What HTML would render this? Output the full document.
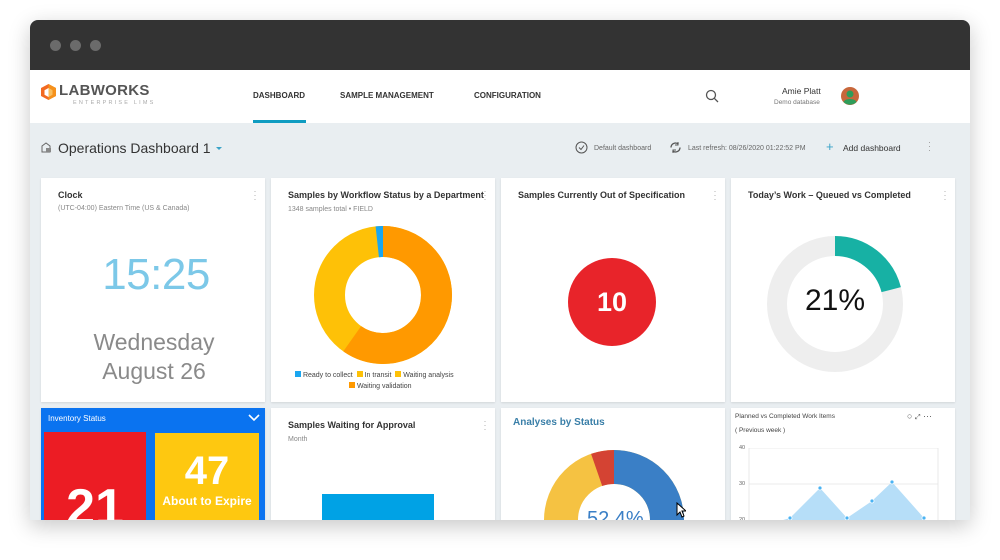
<!DOCTYPE html>
<html><head><meta charset="utf-8"><style>
*{margin:0;padding:0;box-sizing:border-box}
body{width:1000px;height:560px;background:#fff;font-family:"Liberation Sans",sans-serif;position:relative;overflow:hidden}
.win{position:absolute;left:30px;top:20px;width:940px;height:500px;border-radius:8px 8px 0 0;overflow:hidden;box-shadow:0 6px 22px rgba(0,0,0,.22);background:#e9eef1}
.tb{height:50px;background:#333}
.dot{position:absolute;top:20px;width:11px;height:11px;border-radius:50%;background:#6b6b6b}
.nav{position:absolute;top:50px;left:0;width:940px;height:53px;background:#fff}
.abs{position:absolute}
.card{position:absolute;background:#fff;box-shadow:0 1px 2px rgba(0,0,0,.1);overflow:hidden}
.ct{position:absolute;left:17px;top:12px;font-size:9px;font-weight:bold;color:#333}
.cs{position:absolute;left:17px;top:28px;font-size:7px;color:#888}
.kb{position:absolute;right:8px;top:11px;font-size:9px;color:#aaa;line-height:4px;width:4px;text-align:center}
</style></head><body>
<div class="win">
<div class="tb"></div>
<div class="dot" style="left:20px"></div><div class="dot" style="left:40px"></div><div class="dot" style="left:60px"></div>
<div class="nav">
 <svg class="abs" style="left:10px;top:13px" width="17" height="18" viewBox="0 0 17 18"><path d="M8.5 1L16 5v8l-7.5 4L1 13V5z" fill="#f26a21"/><path d="M8.5 5L12.5 7.2v4.6L8.5 14 4.5 11.8V7.2z" fill="#fff"/><path d="M8.5 1L16 5v8l-7.5 4z" fill="#f7a21b" opacity=".7"/></svg>
 <div class="abs" style="left:29px;top:12px;font-size:15px;font-weight:bold;color:#555;letter-spacing:.3px">LABWORKS</div>
 <div class="abs" style="left:43px;top:30px;font-size:5.5px;color:#aaa;letter-spacing:2.2px">ENTERPRISE LIMS</div>
 <div class="abs" style="left:223px;top:21px;font-size:8px;font-weight:bold;color:#333">DASHBOARD</div>
 <div class="abs" style="left:223px;top:50px;width:53px;height:3px;background:#0f9cc1"></div>
 <div class="abs" style="left:310px;top:21px;font-size:8px;font-weight:bold;color:#333">SAMPLE MANAGEMENT</div>
 <div class="abs" style="left:444px;top:21px;font-size:8px;font-weight:bold;color:#333">CONFIGURATION</div>
 <svg class="abs" style="left:675px;top:19px" width="14" height="14" viewBox="0 0 14 14"><circle cx="6" cy="6" r="4.5" fill="none" stroke="#555" stroke-width="1.3"/><path d="M9.3 9.3L13 13" stroke="#555" stroke-width="1.3"/></svg>
 <div class="abs" style="left:752px;top:16px;font-size:8.5px;color:#333">Amie Platt</div>
 <div class="abs" style="left:744px;top:29px;font-size:6.5px;color:#777">Demo database</div>
 <svg class="abs" style="left:811px;top:17px" width="18" height="18" viewBox="0 0 18 18"><circle cx="9" cy="9" r="9" fill="#c8673b"/><circle cx="9" cy="7" r="3.5" fill="#2e9d5a"/><path d="M2.5 15c1.5-4 11.5-4 13 0a9 9 0 0 1-13 0z" fill="#2e9d5a"/></svg>
</div>
<svg class="abs" style="left:11px;top:122px" width="12" height="12" viewBox="0 0 12 12"><path d="M1 4L5 1l4 3v6H1z" fill="none" stroke="#666" stroke-width="1"/><rect x="5" y="6" width="5" height="4" fill="#888"/></svg>
<div class="abs" style="left:28px;top:120px;font-size:14px;color:#333">Operations Dashboard 1</div>
<div class="abs" style="left:186px;top:127px;width:0;height:0;border-left:3px solid transparent;border-right:3px solid transparent;border-top:3px solid #3aa3c8"></div>
<svg class="abs" style="left:545px;top:121px" width="13" height="13" viewBox="0 0 13 13"><circle cx="6.5" cy="6.5" r="5.5" fill="none" stroke="#555" stroke-width="1"/><path d="M4 6.5l2 2 3-4" fill="none" stroke="#555" stroke-width="1"/></svg>
<div class="abs" style="left:564px;top:125px;font-size:7px;color:#666">Default dashboard</div>
<svg class="abs" style="left:639px;top:121px" width="13" height="13" viewBox="0 0 13 13"><path d="M2 6.5a4.5 4.5 0 0 1 7.5-3.3M11 6.5a4.5 4.5 0 0 1-7.5 3.3" fill="none" stroke="#555" stroke-width="1.3"/><path d="M9 1v3h-3M4 12V9h3" fill="none" stroke="#555" stroke-width="1"/></svg>
<div class="abs" style="left:658px;top:125px;font-size:7px;color:#666">Last refresh: 08/26/2020 01:22:52 PM</div>
<div class="abs" style="left:796px;top:119px;font-size:13px;color:#3aa3c8">+</div>
<div class="abs" style="left:813px;top:123px;font-size:8.5px;color:#333">Add dashboard</div>
<div class="abs" style="left:898px;top:120px;font-size:9px;color:#999;line-height:4px">·<br>·<br>·</div>

<!-- row 1 -->
<div class="card" style="left:11px;top:158px;width:224px;height:224px">
 <div class="ct">Clock</div><div class="cs" style="top:27px">(UTC-04:00) Eastern Time (US &amp; Canada)</div><div class="kb">·<br>·<br>·</div>
 <div class="abs" style="left:0;width:230px;top:72px;text-align:center;font-size:44px;color:#7cc8e8;letter-spacing:-0.5px">15:25</div>
 <div class="abs" style="left:0;width:226px;top:150px;text-align:center;font-size:23px;color:#8a8a8a;line-height:29px">Wednesday<br>August 26</div>
</div>
<div class="card" style="left:241px;top:158px;width:224px;height:224px">
 <div class="ct">Samples by Workflow Status by a Department</div><div class="cs">1348 samples total • FIELD</div><div class="kb">·<br>·<br>·</div>
 <svg class="abs" style="left:42px;top:47px" width="140" height="140" viewBox="0 0 140 140"><g transform="rotate(-90 70 70)" fill="none" stroke-width="31">
 <circle cx="70" cy="70" r="53.5" stroke="#fec107" />
 <circle cx="70" cy="70" r="53.5" stroke="#ff9900" stroke-dasharray="200.7 400"/>
 <circle cx="70" cy="70" r="53.5" stroke="#1aa6f0" stroke-dasharray="0 330 6 400"/></g>
 <line x1="70" y1="70" x2="70" y2="0" stroke="#fff" stroke-width="0"/></svg>
 <div class="abs" style="left:24px;top:193px;font-size:7px;color:#444;white-space:nowrap"><span style="display:inline-block;width:6px;height:6px;background:#1aa6f0"></span> Ready to collect &nbsp;<span style="display:inline-block;width:6px;height:6px;background:#fec107"></span> In transit &nbsp;<span style="display:inline-block;width:6px;height:6px;background:#fec107"></span> Waiting analysis</div>
 <div class="abs" style="left:78px;top:204px;font-size:7px;color:#444"><span style="display:inline-block;width:6px;height:6px;background:#ff9900"></span> Waiting validation</div>
</div>
<div class="card" style="left:471px;top:158px;width:224px;height:224px">
 <div class="ct">Samples Currently Out of Specification</div><div class="kb">·<br>·<br>·</div>
 <div class="abs" style="left:67px;top:80px;width:88px;height:88px;border-radius:50%;background:#e8242a;color:#fff;font-size:27px;font-weight:bold;text-align:center;line-height:88px">10</div>
</div>
<div class="card" style="left:701px;top:158px;width:224px;height:224px">
 <div class="ct">Today’s Work – Queued vs Completed</div><div class="kb">·<br>·<br>·</div>
 <svg class="abs" style="left:36px;top:58px" width="136" height="136" viewBox="0 0 136 136"><g transform="rotate(-90 68 68)" fill="none" stroke-width="20"><circle cx="68" cy="68" r="58" stroke="#eeeeee"/><circle cx="68" cy="68" r="58" stroke="#17b1a4" stroke-dasharray="76.5 400"/></g></svg>
 <div class="abs" style="left:0;width:208px;top:106px;text-align:center;font-size:30px;color:#111">21%</div>
</div>

<!-- row 2 -->
<div class="card" style="left:11px;top:388px;width:224px;height:130px;background:#0a73f0">
 <div class="abs" style="left:7px;top:6px;font-size:8px;color:#fff">Inventory Status</div>
 <svg class="abs" style="left:207px;top:6px" width="12" height="8" viewBox="0 0 12 8"><path d="M1 1l5 5 5-5" fill="none" stroke="#fff" stroke-width="1.6"/></svg>
 <div class="abs" style="left:3px;top:24px;width:102px;height:110px;background:#ec1c24;color:#fff;font-size:52px;font-weight:bold;text-align:center;padding-top:46px">21</div>
 <div class="abs" style="left:114px;top:25px;width:104px;height:110px;background:#fec810;color:#fff;text-align:center">
  <div style="font-size:40px;font-weight:bold;margin-top:16px">47</div>
  <div style="font-size:12px;font-weight:bold;margin-top:0">About to Expire</div></div>
</div>
<div class="card" style="left:241px;top:388px;width:224px;height:130px">
 <div class="ct" style="top:12px">Samples Waiting for Approval</div><div class="cs" style="top:28px">Month</div><div class="kb">·<br>·<br>·</div>
 <div class="abs" style="left:51px;top:86px;width:112px;height:50px;background:#00a2e5"></div>
</div>
<div class="card" style="left:471px;top:388px;width:224px;height:130px">
 <div class="abs" style="left:12px;top:9px;font-size:10px;font-weight:bold;color:#3a7fa8">Analyses by Status</div>
 <svg class="abs" style="left:43px;top:42px" width="140" height="140" viewBox="0 0 140 140"><g transform="rotate(-90 70 70)" fill="none" stroke-width="34">
 <circle cx="70" cy="70" r="53" stroke="#f5c242"/>
 <circle cx="70" cy="70" r="53" stroke="#3a7fc6" stroke-dasharray="174.5 400"/>
 <circle cx="70" cy="70" r="53" stroke="#d44333" stroke-dasharray="0 315 18 400"/></g></svg>
 <div class="abs" style="left:86px;top:100px;font-size:20px;color:#3a7fc6">52.4%</div>
 <svg class="abs" style="left:175px;top:94px" width="10" height="16" viewBox="0 0 10 16"><path d="M1 1v12l3-3 2 5 2-1-2-5h4z" fill="#fff" stroke="#000" stroke-width="1"/></svg>
</div>
<div class="card" style="left:701px;top:388px;width:224px;height:130px">
 <div class="abs" style="left:4px;top:5px;font-size:6.5px;color:#444">Planned vs Completed Work Items</div>
 <div class="abs" style="left:4px;top:19px;font-size:6.5px;color:#444">( Previous week )</div>
 <div class="abs" style="left:176px;top:3px;font-size:9px;color:#555">○ <span style="font-size:7px">⤢</span> ···</div>
 <div class="abs" style="left:8px;top:37px;font-size:5.5px;color:#666">40</div>
 <div class="abs" style="left:8px;top:73px;font-size:5.5px;color:#666">30</div>
 <div class="abs" style="left:8px;top:109px;font-size:5.5px;color:#666">20</div>
 <svg class="abs" style="left:17px;top:40px" width="200" height="90" viewBox="0 0 200 90">
 <path d="M1 0V90M1 0H190M1 36H190M190 0V90" fill="none" stroke="#e5e5e5" stroke-width="0.8"/>
 <path d="M25 75L42 70L72 40L99 70L124 53L144 34L176 70L176 90L25 90z" fill="#b6def8"/>
 <g fill="#4ab3f3" stroke="#fff" stroke-width="0.8"><circle cx="42" cy="70" r="2"/><circle cx="72" cy="40" r="2"/><circle cx="99" cy="70" r="2"/><circle cx="124" cy="53" r="2"/><circle cx="144" cy="34" r="2"/><circle cx="176" cy="70" r="2"/></g>
 </svg>
</div>
</div>
</body></html>
